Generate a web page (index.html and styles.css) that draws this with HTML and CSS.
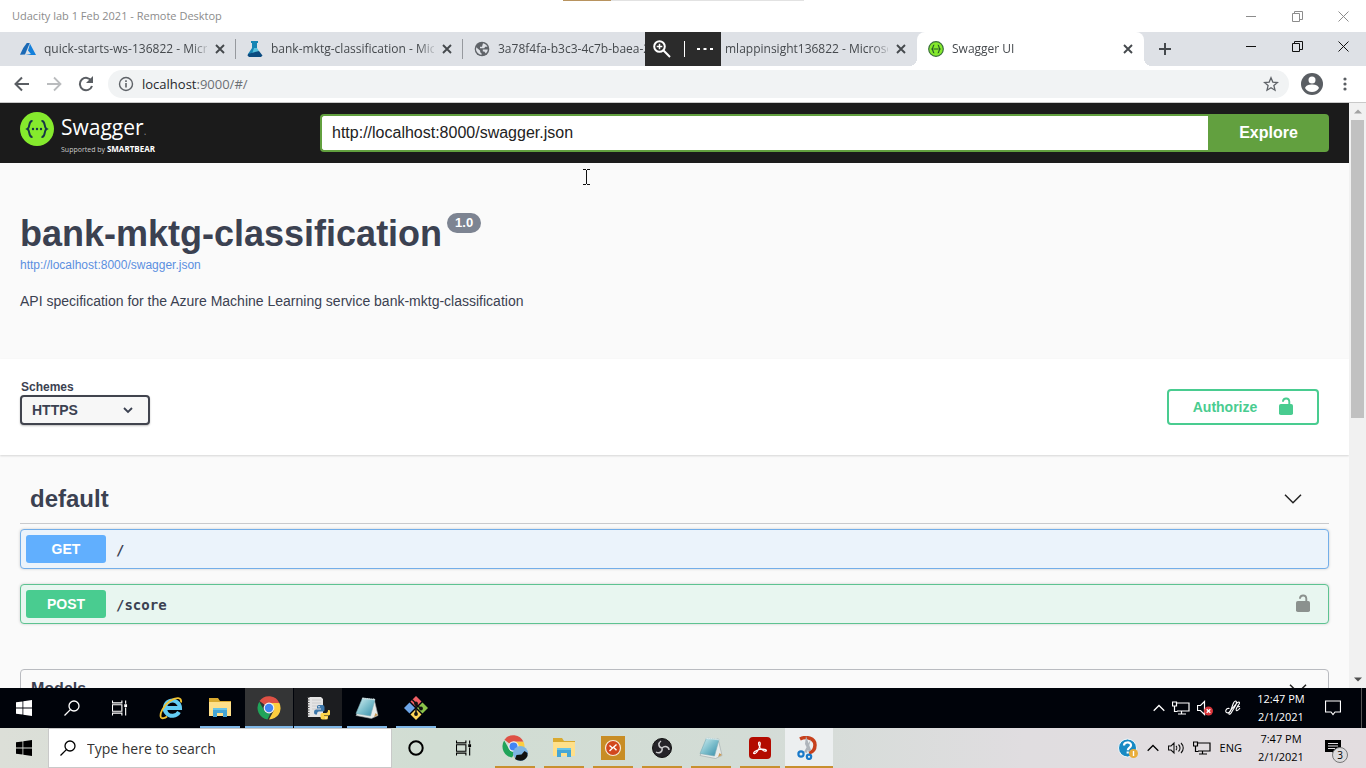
FILE: index.html
```html
<!DOCTYPE html>
<html lang="en">
<head>
<meta charset="utf-8">
<meta name="viewport" content="width=device-width, initial-scale=1">
<title>Swagger UI</title>
<link rel="stylesheet" href="styles.css">
</head>
<body>
<svg class="sprite" aria-hidden="true">
  <symbol id="close" viewBox="0 0 10 10"><path d="M1 1l8 8M9 1L1 9" fill="none" stroke="currentColor" stroke-width="1.900"/></symbol>
  <symbol id="win-min" viewBox="0 0 11 11"><path d="M0 5.500h10" stroke="currentColor"/></symbol>
  <symbol id="win-restore" viewBox="0 0 11 11"><path d="M.5 2.500h7v8h-7zM2.500 2.500v-2h8v8h-3" fill="none" stroke="currentColor"/></symbol>
  <symbol id="win-close" viewBox="0 0 11 11"><path d="M.5.5l10 10M10.500.5l-10 10" fill="none" stroke="currentColor"/></symbol>
  <symbol id="windows" viewBox="0 0 16 16"><path fill="currentColor" d="M0 2.300l6.500-.9v6.200H0zM7.300 1.300L16 0v7.600H7.300zM0 8.400h6.500v6.200L0 13.700zM7.300 8.400H16V16l-8.700-1.300z"/></symbol>
  <symbol id="search" viewBox="0 0 16 16"><g fill="none" stroke="currentColor" stroke-width="1.300"><circle cx="10" cy="6" r="5"/><path d="M6.400 9.600L.5 15.500"/></g></symbol>
  <symbol id="taskview" viewBox="0 0 17 16"><path d="M.5 0v2.500h10V0M.5 16v-2.500h10V16M.5 4.500h10v7H.5zM14.500 0v3.500M14.500 7.500V16" fill="none" stroke="currentColor" stroke-width="1.200"/><path d="M13 4h3v3h-3z" fill="currentColor"/></symbol>
  <symbol id="chrome" viewBox="0 0 24 24"><path fill="#de5145" d="M12 12L2.500 5A11.500 11.500 0 0 1 22.400 7H12z"/><path fill="#fdce40" d="M12 7h10.400A11.500 11.500 0 0 1 12 23.500l4.800-9z"/><path fill="#20a45a" d="M2.300 5.800l5.100 8.900a5 5 0 0 0 6.500 1.900l-3.400 6.800A11.500 11.500 0 0 1 2.300 5.800z"/><circle cx="12" cy="12" r="5.400" fill="#f2f2f2"/><circle cx="12" cy="12" r="4.200" fill="#4285f4"/></symbol>
  <symbol id="folder" viewBox="0 0 24 22"><path fill="#d9a92f" d="M1 1h9l2 3h11v5H1z"/><path fill="#ffe08a" d="M1 5h22v14H1z"/><path fill="#45a6d5" d="M5 11h14v9h-4v-4H9v4H5z"/><path fill="#68c4e8" d="M5 11h14v2H5z"/></symbol>
  <symbol id="notepad" viewBox="0 0 24 24"><defs><linearGradient id="pad" x1="0" y1="0" x2="1" y2="1"><stop offset="0" stop-color="#d8f1f4"/><stop offset=".5" stop-color="#7fc0cd"/><stop offset="1" stop-color="#348ba8"/></linearGradient></defs><path fill="#e8ebe9" stroke="#9aa4a6" stroke-width=".6" d="M19 2.500l4 17-6.500 3L1 19.500l1-2z"/><path fill="#c79956" d="M20.500 17l2.500 2-4 2z"/><path fill="url(#pad)" stroke="#79abb5" stroke-width=".6" d="M7.500 2L20 3.500 15.500 20 1 17.500z"/><path stroke="#f4f6f6" stroke-width="1.400" stroke-dasharray="1.200 .8" d="M7.500 2.200L20 3.700"/></symbol>
  <symbol id="network" viewBox="0 0 18 15"><path d="M5 2.500h12v8H5M9.500 10.500v3M6 13.500h8M.5 1.500h4v4h-4zM2.500 5.500v5.500h3" fill="none" stroke="currentColor" stroke-width="1.200"/></symbol>
  <symbol id="chev-up" viewBox="0 0 12 7"><path d="M.7 6.300L6 1l5.300 5.300" fill="none" stroke="currentColor" stroke-width="1.300"/></symbol>
  <symbol id="chev-down" viewBox="0 0 18 10"><path d="M1 .7l8 8 8-8" fill="none" stroke="currentColor" stroke-width="1.500"/></symbol>
  <symbol id="unlock" viewBox="0 0 14 18"><rect y="7" width="14" height="11" rx="1.800" fill="currentColor"/><path d="M10.300 8V4.500a3.200 3.200 0 0 0-6.300-.5" fill="none" stroke="currentColor" stroke-width="1.900" stroke-linecap="round"/></symbol>
</svg>

<header class="titlebar">
  <span class="titlebar-text">Udacity lab 1 Feb 2021 - Remote Desktop</span>
  <div class="window-buttons">
    <button aria-label="Minimize session"><svg class="i11"><use href="#win-min"/></svg></button>
    <button aria-label="Restore session"><svg class="i11"><use href="#win-restore"/></svg></button>
    <button aria-label="Close session"><svg class="i11"><use href="#win-close"/></svg></button>
  </div>
  <div class="session-edge"></div>
</header>

<nav class="tabstrip" aria-label="Browser tabs">
  <div class="tab">
    <svg class="i16" viewBox="0 0 16 16"><path fill="#1b69b5" d="M6.800 2h3L5 13.500l-5 .3L3.200 7z"/><path fill="#1480db" d="M10 2.800l6 11.300H5.300l5.600-1.200L8 9.400z"/></svg>
    <a class="tab-title" href="#">quick-starts-ws-136822 - Micro</a>
    <button aria-label="Close tab"><svg class="i10"><use href="#close"/></svg></button>
  </div>
  <div class="tab">
    <svg class="i16" viewBox="0 0 16 16"><path fill="#1685b4" d="M4 0h7v2h-1v5L5 13H1l4-6V2H4z"/><path fill="#56c0dc" d="M7 7l3 0 2 3-4 3H5z"/><path fill="#0b4b80" d="M1 13l11-3 3.500 4.500L14 16H2L.5 14.500z"/></svg>
    <a class="tab-title" href="#">bank-mktg-classification - Mic</a>
    <button aria-label="Close tab"><svg class="i10"><use href="#close"/></svg></button>
  </div>
  <div class="tab">
    <svg class="i16" viewBox="0 0 16 16"><circle cx="8" cy="8" r="7.300" fill="#5f6368"/><path fill="#dee1e6" d="M2.200 6.300l4 3.400v1.500l1.300 1v1.700A6 6 0 0 1 2.200 6.300zM9 2.300c2 .3 3.700 1.700 4.500 3.500h-2.300l-1 1.500H6V5.800h2zM13.800 8.500c-.2 1.600-.9 2.900-2 3.900l-1.500-1.800H8.800V8.500z"/></svg>
    <a class="tab-title" href="#">3a78f4fa-b3c3-4c7b-baea-2</a>
    <button aria-label="Close tab"><svg class="i10"><use href="#close"/></svg></button>
  </div>
  <div class="tab">
    <svg class="i16" viewBox="0 0 16 16"><circle cx="8" cy="6" r="5" fill="#7a4fb5"/><path fill="#999" d="M6 12h4v3H6z"/></svg>
    <a class="tab-title" href="#">mlappinsight136822 - Microso</a>
    <button aria-label="Close tab"><svg class="i10"><use href="#close"/></svg></button>
  </div>
  <div class="tab active">
    <svg class="i16" viewBox="0 0 16 16"><circle cx="8" cy="8" r="7.300" fill="#85ea2d" stroke="#39703a" stroke-width="1.200"/><path d="M6.300 4C4.600 4 5.600 7 4 8c1.600 1 .6 4 2.300 4M9.700 4c1.700 0 .7 3 2.300 4-1.600 1-.6 4-2.300 4M5.500 8h5" fill="none" stroke="#235428" stroke-width="1.200"/></svg>
    <a class="tab-title" href="#">Swagger UI</a>
    <button aria-label="Close tab"><svg class="i10"><use href="#close"/></svg></button>
  </div>
  <button class="new-tab" aria-label="New tab"><svg class="i12" viewBox="0 0 12 12"><path d="M6 0v12M0 6h12" stroke="currentColor" stroke-width="2"/></svg></button>
  <div class="window-buttons">
    <button aria-label="Minimize"><svg class="i11"><use href="#win-min"/></svg></button>
    <button aria-label="Restore"><svg class="i11"><use href="#win-restore"/></svg></button>
    <button aria-label="Close"><svg class="i11"><use href="#win-close"/></svg></button>
  </div>
  <div class="session-bar">
    <button aria-label="Zoom"><svg class="i18" viewBox="0 0 18 18"><g fill="none" stroke="#fff" stroke-width="2"><circle cx="6.500" cy="6.500" r="5.300"/><path d="M10.300 10.300L17 17"/><path d="M6.500 3.700v5.600M3.700 6.500h5.600" stroke-width="1.500"/></g></svg></button>
    <span class="session-divider"></span>
    <button aria-label="More"><svg class="i16" viewBox="0 0 16 16"><path fill="#fff" d="M0 7h3v2H0zM6.500 7h3v2h-3zM13 7h3v2h-3z"/></svg></button>
  </div>
</nav>

<div class="toolbar">
  <button aria-label="Back"><svg class="i16" viewBox="0 0 16 16"><path d="M15 8H2M8 1.500L1.500 8 8 14.500" fill="none" stroke="#5a5e63" stroke-width="2"/></svg></button>
  <button aria-label="Forward"><svg class="i16" viewBox="0 0 16 16"><path d="M1 8h13M8 1.500L14.500 8 8 14.500" fill="none" stroke="#babcbe" stroke-width="1.800"/></svg></button>
  <button aria-label="Reload"><svg class="i16" viewBox="0 0 16 16"><path d="M13.500 5A6.200 6.200 0 1 0 14 10" fill="none" stroke="#5a5e63" stroke-width="2"/><path fill="#5a5e63" d="M15 0v7H8z"/></svg></button>
  <div class="omnibox">
    <svg class="i16" viewBox="0 0 16 16"><circle cx="8" cy="8" r="6.500" fill="none" stroke="#5f6368" stroke-width="1.400"/><path d="M8 7v4.500M8 4.200v1.700" stroke="#5f6368" stroke-width="1.600"/></svg>
    <a class="address" href="#/">localhost<span>:9000/#/</span></a>
    <button aria-label="Bookmark"><svg class="i16" viewBox="0 0 16 16"><path d="M8 1.800l1.800 4.300 4.700.4-3.600 3.100L12 14.200l-4-2.500-4 2.500 1.100-4.600-3.600-3.100 4.700-.4z" fill="none" stroke="#5f6368" stroke-width="1.300"/></svg></button>
  </div>
  <button aria-label="Profile"><svg class="i22" viewBox="0 0 22 22"><circle cx="11" cy="11" r="11" fill="#5a5e63"/><circle cx="11" cy="7" r="3.500" fill="#fff"/><path fill="#fff" d="M4 15c1-3 4.500-3.500 7-3.500s6 .5 7 3.500c-1.500 2.400-4 4-7 4s-5.500-1.600-7-4z"/></svg></button>
  <button class="menu" aria-label="Menu"><svg class="i16" viewBox="0 0 16 16"><g fill="#5a5e63"><circle cx="8" cy="3" r="1.600"/><circle cx="8" cy="8" r="1.600"/><circle cx="8" cy="13" r="1.600"/></g></svg></button>
</div>

<div class="viewport">
  <main class="page">
    <div class="topbar">
      <a class="logo" href="#">
        <svg class="i34" viewBox="0 0 34 34"><circle cx="17" cy="17" r="17" fill="#85ea2d"/><g fill="none" stroke="#173647" stroke-width="2"><path d="M12.500 9C8 8.500 10.500 15.500 7.500 17c3 1.500.5 8.500 5 8M21.500 9c4.500-.5 2 6.500 5 8-3 1.500-.5 8.500-5 8"/></g><g fill="#173647"><circle cx="13" cy="17" r="1.200"/><circle cx="17" cy="17" r="1.200"/><circle cx="21" cy="17" r="1.200"/></g></svg>
        <span class="logo-words"><span class="logo-name">Swagger<small>.</small></span><span class="logo-by">Supported by <b>SMARTBEAR</b></span></span>
      </a>
      <form class="explore">
        <input type="text" aria-label="Specification URL" value="http://localhost:8000/swagger.json">
        <button type="button">Explore</button>
      </form>
    </div>

    <section class="info">
      <h1>bank-mktg-classification <span class="version">1.0</span></h1>
      <a class="spec-link" href="#">http://localhost:8000/swagger.json</a>
      <p>API specification for the Azure Machine Learning service bank-mktg-classification</p>
    </section>

    <section class="schemes">
      <div class="scheme-field">
        <label for="scheme">Schemes</label>
        <div class="select-wrap">
          <select id="scheme"><option>HTTPS</option></select>
          <svg class="select-arrow" viewBox="0 0 10 7"><path d="M1 1l4 4 4-4" fill="none" stroke="currentColor" stroke-width="1.800"/></svg>
        </div>
      </div>
      <button class="authorize" type="button">Authorize <svg class="lock"><use href="#unlock"/></svg></button>
    </section>

    <section class="operations">
      <h2>default <button aria-label="Collapse default"><svg class="chevron"><use href="#chev-down"/></svg></button></h2>
      <div class="op get">
        <button class="method">GET</button><a href="#">/</a>
      </div>
      <div class="op post">
        <button class="method">POST</button><a href="#">/score</a>
        <button class="op-lock" aria-label="Authorization"><svg class="lock"><use href="#unlock"/></svg></button>
      </div>
      <div class="models">
        <h3>Models <button aria-label="Collapse models"><svg class="chevron"><use href="#chev-down"/></svg></button></h3>
      </div>
    </section>
    <svg class="ibeam" viewBox="0 0 7 16"><path d="M0 .5h3M4 .5h3M3.500 1v14M0 15.500h3M4 15.500h3" fill="none" stroke="#111"/></svg>
  </main>
  <div class="scrollbar" aria-hidden="true">
    <svg class="scroll-arrow" viewBox="0 0 8 5"><path fill="#a3a3a3" d="M0 4.500L4 .5l4 4z"/></svg>
    <div class="track"><div class="thumb"></div></div>
    <svg class="scroll-arrow" viewBox="0 0 8 5"><path fill="#505050" d="M0 .5L4 4.500l4-4z"/></svg>
  </div>
</div>

<footer class="taskbar remote">
  <button aria-label="Start"><svg class="i16"><use href="#windows"/></svg></button>
  <button aria-label="Search"><svg class="i16"><use href="#search"/></svg></button>
  <button aria-label="Task view"><svg class="i16"><use href="#taskview"/></svg></button>
  <div class="apps">
    <button aria-label="Internet Explorer"><svg class="i24" viewBox="0 0 24 24"><path d="M20 16a7.600 7.600 0 1 1 1-4H7" fill="none" stroke="#63cdf4" stroke-width="4"/><path d="M22 6.500C23 1 17 1 11 5S0 18 2 21.500c1 1.500 4 .5 6-1" fill="none" stroke="#f2c330" stroke-width="1.800"/></svg></button>
    <button class="open" aria-label="File Explorer"><svg class="i24"><use href="#folder"/></svg></button>
    <button class="open current" aria-label="Chrome"><svg class="i24"><use href="#chrome"/></svg></button>
    <button class="open warm" aria-label="Python"><svg class="i24" viewBox="0 0 24 24"><path fill="#e4e4e4" d="M2 1h13l2 2v18H2z"/><path stroke="#555" stroke-dasharray="1 1.500" stroke-width="2" d="M2.500 1v20"/><path d="M6 4h9M6 7h9M6 10h9M6 13h5" stroke="#ccc"/><path fill="#3c77ab" d="M11 10.500q0-1.500 2-1.500h3.500q2 0 2 2v3q0 1.500-1.500 1.500h-4q-2 0-2 3H9.500Q8 18.500 8 16t2-2.500h5V12.500h-4z"/><path fill="#ffd54a" d="M22 22q0 1.500-2 1.500h-3.500q-2 0-2-2v-3q0-1.500 1.500-1.500h4q2 0 2-3h1q1.500 0 1.500 2.500T22.500 19.500H18v.5h4z"/><circle cx="13" cy="10.800" r=".8" fill="#fff"/><circle cx="20" cy="22" r=".7" fill="#fff"/></svg></button>
    <button class="open" aria-label="Notepad"><svg class="i24"><use href="#notepad"/></svg></button>
    <button class="open" aria-label="Git Bash"><svg class="i24" viewBox="0 0 24 24"><path fill="#ef5f64" d="M12 0l5.500 5.500L12 11 6.500 5.500z"/><path fill="#8bc34a" d="M18.500 6.500L24 12l-5.500 5.500L13 12z"/><path fill="#ffd659" d="M12 13l5.500 5.500L12 24l-5.500-5.500z"/><path fill="#6ca5e8" d="M5.500 6.500L11 12l-5.500 5.500L0 12z"/><path d="M8 3.500l4 4V18M12 8l5 5" fill="none" stroke="#111" stroke-width="1.500"/><g fill="#111"><circle cx="12" cy="7.500" r="1.900"/><circle cx="12" cy="18" r="1.900"/><circle cx="17" cy="12.500" r="1.900"/></g></svg></button>
  </div>
  <div class="tray">
    <svg class="i12"><use href="#chev-up"/></svg>
    <svg class="i18"><use href="#network"/></svg>
    <svg class="i16" viewBox="0 0 16 16"><path d="M.5 5.500h3l4-4v13l-4-4h-3z" fill="none" stroke="#fff" stroke-width="1.200"/><circle cx="11.500" cy="11" r="4.500" fill="#d9363b"/><path d="M9.700 9.200l3.600 3.600M13.300 9.200l-3.600 3.600" stroke="#fff" stroke-width="1.300"/></svg>
    <svg class="i18 pen" viewBox="0 0 18 18"><path d="M5.500 9.500C2 8.500.5 13 3 13.800c3 .8 4-2.500 5-5.800s2-6 3.500-6 1 3-.5 5.500l-3 5c-1 2-2.500 3.500-3 2.500s1-2.500 2-4l5-6c1.500-1.500 3-2.500 3.500-1.500s-1 2.500-2 4-2 3.500-1 4 2.500-1 3.500-2.500M13 8l3-.5" fill="none" stroke="#fff" stroke-width="1.100"/></svg>
  </div>
  <div class="clock"><time>12:47 PM</time><span>2/1/2021</span></div>
  <button class="notices" aria-label="Notifications"><svg class="i16" viewBox="0 0 16 16"><path d="M.5 1h15v11H10l-2 2.500L6 12H.5z" fill="none" stroke="#fff" stroke-width="1.200"/></svg></button>
</footer>

<footer class="taskbar host">
  <button aria-label="Start menu"><svg class="i16"><use href="#windows"/></svg></button>
  <div class="searchbox"><svg class="i16"><use href="#search"/></svg><input type="text" aria-label="Windows search" placeholder="Type here to search"></div>
  <button aria-label="Cortana"><svg class="i16" viewBox="0 0 16 16"><circle cx="8" cy="8" r="6.700" fill="none" stroke="#000" stroke-width="2"/></svg></button>
  <button aria-label="Task view"><svg class="i16"><use href="#taskview"/></svg></button>
  <div class="apps">
    <button class="open" aria-label="Chrome"><svg class="i26" viewBox="0 0 26 26"><use href="#chrome" width="23" height="23"/><circle cx="18.500" cy="18.500" r="7.500" fill="#7db4e3"/><path fill="#111" d="M13 24l1.500-4 5-.5 3-3.500 3 2v3c-2 5-8 6-12.500 3z"/></svg></button>
    <button class="open" aria-label="File Explorer"><svg class="i24"><use href="#folder"/></svg></button>
    <button class="open" aria-label="Remote Desktop"><svg class="i24" viewBox="0 0 24 24"><path fill="#c88d25" d="M0 0h24v24H0z"/><circle cx="12" cy="12" r="7.500" fill="#d2481e" stroke="#f7e9d8" stroke-width="1.200"/><path d="M8.500 9.500l3 2.500-3 3M15.500 8.500l-3 2.800 3 3" fill="none" stroke="#fff" stroke-width="1.400"/></svg></button>
    <button class="open" aria-label="OBS Studio"><svg class="i20" viewBox="0 0 20 20"><circle cx="10" cy="10" r="9.500" fill="#252429" stroke="#111"/><path d="M10 10c-4-1-4-5-1-7M10 10c3-3 7-1 7 2M10 10c1 4-3 6-6 4" fill="none" stroke="#c9c9cb" stroke-width="1.500"/></svg></button>
    <button class="open" aria-label="Notepad"><svg class="i24"><use href="#notepad"/></svg></button>
    <button class="open" aria-label="Acrobat Reader"><svg class="i22" viewBox="0 0 22 22"><rect width="22" height="22" rx="4" fill="#b30b00"/><path d="M5 16.500c-1.500-.5 2-3.500 5.500-4 4-.8 7.500 0 6.800 1.300-.8 1-4-.3-6-2.800C9.500 8.500 9 5 10.300 5c1.500 0 1 4-.3 6.500-1.500 3-3.800 5.500-5 5z" fill="none" stroke="#fff" stroke-width="1.200"/></svg></button>
    <button class="open current" aria-label="Snipping Tool"><svg class="i24" viewBox="0 0 24 24"><path d="M3 3c6-3 15-1 15 6 0 4-2 7-6 8" fill="none" stroke="#c7401c" stroke-width="3.500"/><path fill="#aeb4ba" d="M9 0l5 14-2 2-4-8zM14 3l-4 14-3-1z"/><g fill="none" stroke="#1979c9" stroke-width="2.200"><circle cx="4" cy="18" r="2.600"/><circle cx="12" cy="20.800" r="2.200"/></g></svg></button>
  </div>
  <div class="tray">
    <svg class="i20" viewBox="0 0 20 20"><circle cx="9.500" cy="10" r="9" fill="#188ac4" stroke="#eef7fb"/><path d="M6 7.500c0-4 7-4 7-.2 0 2.500-3.200 2.200-3.200 5M9.700 13.500v2" fill="none" stroke="#fff" stroke-width="2.200"/><circle cx="15.500" cy="15.500" r="4.500" fill="#e9ad3b"/><path d="M15.500 13v5" stroke="#fff" stroke-width="1.400"/></svg>
    <svg class="i12"><use href="#chev-up"/></svg>
    <svg class="i16" viewBox="0 0 16 16"><path d="M.5 6h2.500l3-3v10l-3-3H.5zM8 6c1 1 1 3 0 4M10.500 4.500c2 2 2 5 0 7M13 3c3 3 3 7 0 10" fill="none" stroke="#111" stroke-width="1.100"/></svg>
    <svg class="i18"><use href="#network"/></svg>
    <span class="lang">ENG</span>
  </div>
  <div class="clock"><time>7:47 PM</time><span>2/1/2021</span></div>
  <button class="notices" aria-label="3 new notifications"><svg class="i16" viewBox="0 0 16 16"><path d="M0 0h16v12h-5v3l-4-3H0z"/><path d="M3 3.500h10M3 6h10M3 8.500h7" stroke="#e1dde0"/></svg><span class="badge">3</span></button>
</footer>
</body>
</html>
```
FILE: styles.css
```css
* { box-sizing: border-box; }
body {
  margin: 0;
  height: 100vh;
  display: flex;
  flex-direction: column;
  overflow: hidden;
  font: 12px/16px "Open Sans", "Noto Sans", sans-serif;
  color: #3b4151;
  background: #fff;
}
button { border: 0; padding: 0; background: none; color: inherit; font: inherit; display: flex; align-items: center; justify-content: center; }
a { color: inherit; text-decoration: none; }
svg { display: block; flex: none; }
.sprite { position: absolute; width: 0; height: 0; }
.i10 { width: 10px; height: 10px; }
.i11 { width: 11px; height: 11px; }
.i12 { width: 12px; height: 12px; }
.i16 { width: 16px; height: 16px; }
.i18 { width: 18px; height: 18px; }
.i20 { width: 20px; height: 20px; }
.i22 { width: 22px; height: 22px; }
.i24 { width: 24px; height: 24px; }
.i26 { width: 26px; height: 26px; }
.i34 { width: 34px; height: 34px; }

/* Window frame */
.titlebar { position: relative; flex: none; height: 32px; display: flex; align-items: center; padding-left: 12px; background: #fff; color: #8c8c8c; font-size: 11px; }
.window-buttons { margin-left: auto; display: flex; }
.window-buttons button { width: 46px; height: 28px; }
.session-edge { position: absolute; top: 0; left: calc(50% - 120px); width: 241px; height: 1px; background: linear-gradient(90deg, #b8935f 48px, #e2e2e2 48px); }

.tabstrip { position: relative; flex: none; height: 34px; display: flex; background: #dee1e6; padding-left: 9px; color: #45494d; }
.tab { flex: 0 1 227px; min-width: 0; display: flex; align-items: center; gap: 8px; padding: 0 11px; background: linear-gradient(#96999e, #96999e) right center / 1px 20px no-repeat; }
.tab:nth-child(4) { background: none; }
.tab.active { position: relative; background: #fff; border-radius: 8px 8px 0 0; }
.tab.active::before, .tab.active::after { content: ""; position: absolute; bottom: 0; width: 8px; height: 8px; }
.tab.active::before { right: 100%; background: radial-gradient(circle at 0 0, transparent 8px, #fff 8px); }
.tab.active::after { left: 100%; background: radial-gradient(circle at 100% 0, transparent 8px, #fff 8px); }
.tab-title { flex: 1; min-width: 0; overflow: hidden; white-space: nowrap; font-size: 12px; mask-image: linear-gradient(90deg, #000 calc(100% - 16px), rgba(0, 0, 0, .2)); }
.new-tab { width: 28px; margin-left: 7px; }
.tabstrip .window-buttons { color: #111; }
.session-bar { position: absolute; top: 0; bottom: 0; left: calc(50% - 38px); width: 76px; display: flex; align-items: center; justify-content: space-between; padding: 0 8px; background: #2b2b2b; }
.session-divider { width: 1px; height: 16px; background: #fff; }

.toolbar { flex: none; height: 37px; display: flex; align-items: center; gap: 16px; padding: 0 15px 0 14px; border-bottom: 1px solid #c9c9c9; background: #fff; }
.omnibox { flex: 1; height: 28px; margin-right: -4px; margin-left: -2px; display: flex; align-items: center; gap: 8px; padding: 0 10px; border-radius: 14px; background: #f1f3f4; }
.address { flex: 1; font-size: 13px; color: #26282b; }
.address span { color: #6c7074; }
.menu { margin: 0 -2px; }

/* Page viewport */
.viewport { flex: 1; min-height: 0; display: flex; background: #fafafa; }
.page { position: relative; flex: 1; min-width: 0; overflow: hidden; font-family: "Liberation Sans", Arial, sans-serif; }
.scrollbar { width: 17px; display: flex; flex-direction: column; align-items: center; background: #f1f1f1; padding: 6px 0; }
.scroll-arrow { width: 8px; height: 5px; }
.track { flex: 1; width: 13px; margin: 6px 0; }
.thumb { height: 54%; background: #c1c1c1; }
.ibeam { position: absolute; left: 583px; top: 66px; width: 7px; height: 16px; }

.topbar { height: 60px; display: flex; align-items: center; padding: 0 20px; background: #1b1b1b; }
.logo { flex: 0 0 300px; display: flex; gap: 7px; color: #fff; font-family: "Open Sans", sans-serif; }
.logo-words { display: flex; flex-direction: column; padding-top: 4px; }
.logo-name { font-size: 21px; line-height: 25px; }
.logo-name small { font-size: 10px; color: #888; }
.logo-by { font-size: 7px; line-height: 10px; color: #ccc; }
.logo-by b { font-size: 8px; color: #fff; }
.logo .i34 { margin-top: 1px; }
.explore { flex: 1; height: 38px; display: flex; }
.explore input { flex: 1; min-width: 0; border: 2px solid #62a03f; border-right: 0; border-radius: 4px 0 0 4px; padding: 0 10px; background: #fff; color: #222; font: 16px "Liberation Sans", Arial, sans-serif; }
.explore button { width: 121px; border-radius: 0 4px 4px 0; background: #62a03f; color: #fff; font-size: 16px; font-weight: 700; }

.info { padding: 50px 20px 48px; }
h1 { margin: 0; display: flex; align-items: flex-start; gap: 5px; font-size: 36px; line-height: 41px; }
.version { padding: 0 8px; border-radius: 10px; background: #7d8492; color: #fff; font-size: 13px; line-height: 20px; }
.spec-link { display: block; margin-top: 3px; font-size: 12px; line-height: 16px; color: #5a8fe0; }
.info p { margin: 18px 0 0; font-size: 14px; line-height: 20px; }

.schemes { display: flex; justify-content: space-between; align-items: flex-end; padding: 21px 30px 30px 20px; background: #fff; box-shadow: 0 1px 2px rgba(0, 0, 0, .15); }
.scheme-field label { display: block; padding-left: 1px; line-height: 15px; font-size: 12px; font-weight: 700; }
.select-wrap { position: relative; width: 130px; }
select { display: block; width: 100%; height: 30px; appearance: none; border: 2px solid #41444e; border-radius: 4px; background: #f7f7f7; box-shadow: 0 1px 2px rgba(0, 0, 0, .25); padding: 0 10px; color: #3b4151; font: 700 14px "Liberation Sans", Arial, sans-serif; }
.select-arrow { position: absolute; right: 17px; top: 12px; width: 10px; height: 7px; }
.authorize { gap: 22px; width: 152px; height: 36px; border: 2px solid #49cc90; border-radius: 4px; color: #49cc90; font-size: 14px; font-weight: 700; }
.lock { width: 14px; height: 18px; margin-bottom: 2px; }

.operations { padding: 20px 20px 0; }
h2 { margin: 0 0 5px; height: 49px; display: flex; align-items: center; justify-content: space-between; padding: 0 27px 0 10px; border-bottom: 1px solid #c9cacd; font-size: 24px; }
.chevron { width: 18px; height: 10px; color: #222; }
.op { height: 40px; display: flex; align-items: center; padding: 0 18px 0 5px; margin-bottom: 15px; border: 1px solid; border-radius: 4px; box-shadow: 0 0 3px rgba(0, 0, 0, .19); }
.op a { flex: 1; padding: 2px 10px 0; font: 700 14px "DejaVu Sans Mono", monospace; }
.method { width: 80px; height: 28px; border-radius: 3px; color: #fff; font-size: 14px; font-weight: 700; }
.get { border-color: #73aee9; background: #ebf3fb; }
.get .method { background: #61affe; }
.post { border-color: #5dc391; background: #e8f6f0; }
.post .method { background: #49cc90; }
.op-lock { color: #8b918e; }
.models { margin-top: 45px; height: 60px; border: 1px solid #b9bbc0; border-radius: 4px; }
h3 { margin: 0; height: 38px; display: flex; align-items: center; justify-content: space-between; padding: 0 21px 0 10px; font-size: 16px; }

/* Taskbars */
.taskbar { flex: none; height: 40px; display: flex; }
.taskbar > button, .apps button { width: 48px; height: 40px; flex: none; }
.remote { background: #00030a; color: #fff; }
.host { background: linear-gradient(90deg, #dcdfd8, #d1ddd3 32%, #d3dcd6 55%, #e0dde0 75%, #e3dde0); color: #000; }
.apps { display: flex; gap: 1px; margin-left: 3px; }
.open { background: linear-gradient(#7eb6e6, #7eb6e6) center bottom / 40px 2px no-repeat; }
.open.warm { background-color: #1c1d20; background-size: 48px 2px; }
.open.current { background-color: #343536; background-size: 48px 2px; }
.host .open { background-image: linear-gradient(#c8902f, #c8902f); }
.host .open.current { background-color: #eceff0; }
.tray { margin-left: auto; display: flex; align-items: center; gap: 7px; }
.host .tray { gap: 9px; }
.pen { margin-left: 4px; }
.lang { font-size: 11px; }
.clock { width: 78px; display: flex; flex-direction: column; align-items: center; justify-content: center; font-size: 11px; line-height: 18px; }
.taskbar > .notices { position: relative; width: 46px; padding-right: 20px; }
.remote .notices { background: linear-gradient(#555, #555) 41px 0 / 1px 100% no-repeat; }
.badge { position: absolute; left: 12px; top: 19px; width: 16px; height: 16px; border: 1px solid #777; border-radius: 50%; background: #dcdadc; font-size: 10px; line-height: 14px; text-align: center; }
.searchbox { flex: 0 1 344px; display: flex; align-items: center; gap: 11px; padding: 0 11px; background: #fff; border: 1px solid #c9c9c9; }
.searchbox input { flex: 1; min-width: 0; border: 0; padding: 0; background: none; font: 14px "Open Sans", sans-serif; }
.searchbox input::placeholder { color: #333; opacity: 1; }
```
